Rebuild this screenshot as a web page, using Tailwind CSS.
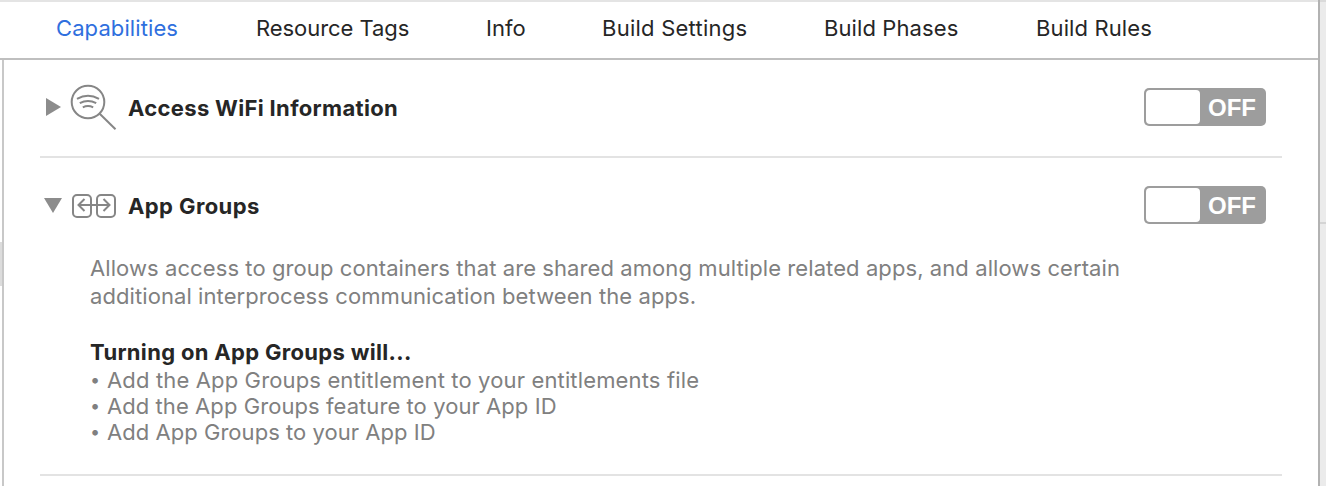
<!DOCTYPE html>
<html lang="en">
<head>
<meta charset="utf-8">
<title>Capabilities</title>
<script src="https://cdn.jsdelivr.net/npm/@tailwindcss/browser@4"></script>
</head>
<body class="w-[1326px] h-[486px] overflow-hidden bg-white flex font-['Inter',sans-serif] text-[22px] text-[#262626] whitespace-nowrap">
  <main class="w-[1318px] h-full flex flex-col">
    <nav class="h-[60px] shrink-0 flex pl-14 pt-[12px] leading-[28px] border-t-2 border-t-[#e4e4e4] border-b-2 border-b-[#bfbfbf]">
      <a class="w-[200px] text-[#2f6fde]"><span class="tracking-[0.1px]">Capabilities</span></a>
      <a class="w-[230px]"><span class="tracking-[-0.06px]">Resource Tags</span></a>
      <a class="w-[116px]"><span class="tracking-[0.05px]">Info</span></a>
      <a class="w-[222px]"><span class="tracking-[0.24px]">Build Settings</span></a>
      <a class="w-[212px]"><span class="tracking-[0.1px]">Build Phases</span></a>
      <a><span class="tracking-[0.12px]">Build Rules</span></a>
    </nav>
    <div class="flex-1 flex">
      <div class="w-[2px] pt-[182px]"><div class="h-11 bg-[#dcdcdc]"></div></div>
      <div class="flex-1 border-l-2 border-[#c8c8c8] pl-9 pr-9">
        <section class="h-[98px] border-b-2 border-[#e3e3e3] flex items-center">
          <svg class="w-[88px] h-24 shrink-0" viewBox="40 60 88 96" fill="none" stroke="#868686" stroke-width="2">
            <path d="M46 98V116L61 107Z" fill="#8c8c8c" stroke="none"/>
            <circle cx="88" cy="102" r="16.300"/>
            <path d="M99.700 113.700L115.500 129.300"/>
            <path d="M77 98.800Q88 92.600 99 98.800M79.800 103.200Q88 98.600 96.200 103.200M82.800 107.400Q88 104.800 93.200 107.400"/>
          </svg>
          <h2 class="font-bold tracking-[0.33px]">Access WiFi Information</h2>
          <div class="ml-auto mr-4 mb-[2px] w-[122px] h-[38px] rounded-[5px] bg-[#9d9d9d] p-[2px] flex items-center shrink-0">
            <div class="w-[54px] h-[34px] rounded-[4px] bg-white"></div>
            <span class="ml-[8px] pt-px font-['Liberation_Sans',sans-serif] font-bold text-[24px] leading-[33px] text-white">OFF</span>
          </div>
        </section>
        <section class="h-[318px] border-b-2 border-[#e3e3e3] flex flex-col">
          <div class="h-24 flex items-center shrink-0">
            <svg class="w-[88px] h-24 shrink-0" viewBox="40 158 88 96" fill="none" stroke="#868686" stroke-width="2">
              <path d="M44 198H62L53 213Z" fill="#8c8c8c" stroke="none"/>
              <rect x="73" y="195" width="18" height="22" rx="4"/>
              <rect x="97" y="195" width="18" height="22" rx="4"/>
              <path d="M79 205H109M84.500 199L78.500 205L84.500 211M103.500 199L109.500 205L103.500 211"/>
            </svg>
            <h2 class="font-bold tracking-[0.4px]">App Groups</h2>
            <div class="ml-auto mr-4 mb-[2px] w-[122px] h-[38px] rounded-[5px] bg-[#9d9d9d] p-[2px] flex items-center shrink-0">
              <div class="w-[54px] h-[34px] rounded-[4px] bg-white"></div>
              <span class="ml-[8px] pt-px font-['Liberation_Sans',sans-serif] font-bold text-[24px] leading-[33px] text-white">OFF</span>
            </div>
          </div>
          <div class="pl-[50px] text-[#808080] leading-[28px]">
            <p class="tracking-[0.085px]">Allows access to group containers that are shared among multiple related apps, and allows certain</p>
            <p class="tracking-[0.08px]">additional interprocess communication between the apps.</p>
            <h3 class="mt-7 font-bold text-[#262626]"><span class="tracking-[0.32px]">Turning on App Groups will...</span></h3>
            <ul class="leading-[26px] mt-px">
              <li class="flex"><span class="w-[17px] text-[18px]">•</span><span class="tracking-[0.145px]">Add the App Groups entitlement to your entitlements file</span></li>
              <li class="flex"><span class="w-[17px] text-[18px]">•</span><span class="tracking-[0.07px]">Add the App Groups feature to your App ID</span></li>
              <li class="flex"><span class="w-[17px] text-[18px]">•</span><span class="tracking-[0.04px]">Add App Groups to your App ID</span></li>
            </ul>
          </div>
        </section>
      </div>
    </div>
  </main>
  <aside class="w-2 h-full border-l-2 border-[#b2b2b2] bg-[#ebebeb] flex flex-col">
    <div class="h-[2px] bg-[#dadada]"></div>
    <div class="h-[220px]"></div>
    <div class="h-[2px] bg-[#d4d4d4]"></div>
  </aside>
</body>
</html>
